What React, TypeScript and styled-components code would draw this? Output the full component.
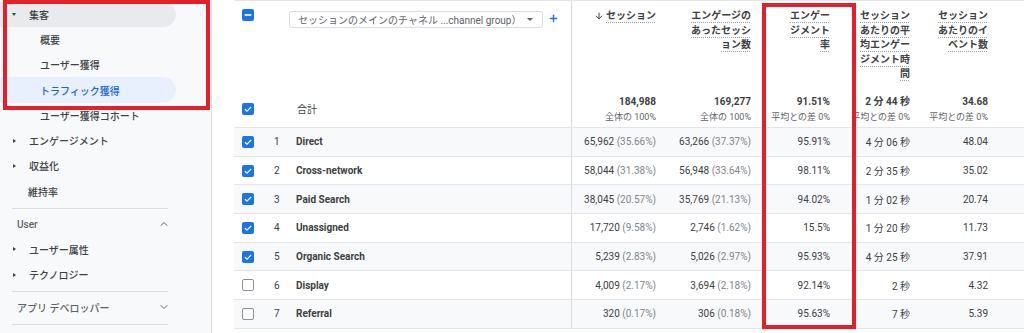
import React from 'react';
import styled, { createGlobalStyle } from 'styled-components';
import { ArrowDown, ChevronDown, ChevronUp, Plus } from 'lucide-react';

const GlobalStyle = createGlobalStyle`
  html, body {
    margin: 0;
    padding: 0;
    background: #ffffff;
  }
  body {
    font-family: Roboto, "Noto Sans CJK JP", sans-serif;
    font-size: 10px;
    color: #3c4043;
  }
  * {
    box-sizing: border-box;
  }
`;

const Page = styled.div`
  position: relative;
  display: flex;
  width: 1024px;
  height: 333px;
  overflow: hidden;
`;

/* ---------- sidebar ---------- */

const Sidebar = styled.nav`
  flex: none;
  width: 212px;
  padding-top: 1.5px;
  background: #f8f9fa;
  border-right: 1px solid #dadce0;
`;

const NavItem = styled.div<{ $indent: number; $variant?: 'open' | 'active' }>`
  display: flex;
  align-items: center;
  width: 176px;
  height: 25.3px;
  padding-left: ${(p) => p.$indent}px;
  border-radius: 0 13px 13px 0;
  font-weight: 500;
  white-space: nowrap;
  color: ${(p) => (p.$variant === 'active' ? '#1967d2' : '#3c4043')};
  background: ${(p) =>
    p.$variant === 'open' ? '#e8eaed' : p.$variant === 'active' ? '#e8f0fe' : 'transparent'};
`;

const CaretBox = styled.span`
  display: flex;
  align-items: center;
  width: 17px;
  height: 100%;
`;

const Caret = styled.span<{ $open?: boolean }>`
  display: block;
  width: 0;
  height: 0;
  ${(p) =>
    p.$open
      ? `border-left: 2.5px solid transparent;
         border-right: 2.5px solid transparent;
         border-top: 3px solid #3c4043;`
      : `margin-left: 1px;
         border-top: 2.5px solid transparent;
         border-bottom: 2.5px solid transparent;
         border-left: 3px solid #3c4043;`}
`;

const Divider = styled.div`
  width: 156px;
  height: 1px;
  margin: 4px 0 2.5px 12px;
  background: #dadce0;
`;

const SectionHead = styled.div`
  display: flex;
  align-items: center;
  justify-content: space-between;
  width: 170px;
  height: 25.3px;
  padding-left: 17px;
  color: #5f6368;
  font-weight: 500;
  svg {
    color: #5f6368;
  }
`;

/* ---------- report table ---------- */

const Main = styled.main`
  flex: 1;
  padding-left: 22px;
`;

const cols = '28px 28px 282px 93px 95px 79px 80px 78px 1fr';

const Table = styled.div`
  border-top: 1px solid #e3e5e8;
`;

const Row = styled.div<{ $height: number; $shade?: boolean; $line?: boolean }>`
  display: grid;
  grid-template-columns: ${cols};
  height: ${(p) => p.$height}px;
  background: ${(p) => (p.$shade ? '#f8f9fa' : '#ffffff')};
  border-bottom: ${(p) => (p.$line ? '1px solid #e3e5e8' : 'none')};
`;

const Cell = styled.div<{ $align?: 'top' | 'center'; $pl?: number; $divide?: boolean }>`
  display: flex;
  align-items: ${(p) => (p.$align === 'top' ? 'flex-start' : 'center')};
  padding-left: ${(p) => p.$pl ?? 0}px;
  min-width: 0;
  border-right: ${(p) => (p.$divide ? '1px solid #dadce0' : 'none')};
`;

const MetricCell = styled.div<{ $top?: boolean }>`
  display: flex;
  flex-direction: column;
  align-items: flex-end;
  justify-content: ${(p) => (p.$top ? 'flex-start' : 'center')};
  padding: ${(p) => (p.$top ? '8px 9px 0 0' : '0 9px 0 0')};
  white-space: nowrap;
  text-align: right;
`;

const TitleLine = styled.span`
  display: flex;
  align-items: center;
  gap: 2px;
  line-height: 14.6px;
  font-weight: 700;
  color: #3c4043;
`;

const Dotted = styled.span`
  text-decoration: underline dotted #9aa0a6;
  text-decoration-thickness: 1px;
  text-underline-offset: 3px;
`;

const Check = styled.span<{ $state: 'on' | 'off' | 'mixed' }>`
  display: inline-flex;
  align-items: center;
  justify-content: center;
  flex: none;
  width: 12px;
  height: 12px;
  border-radius: 2px;
  background: ${(p) => (p.$state === 'off' ? '#ffffff' : '#1a73e8')};
  border: ${(p) => (p.$state === 'off' ? '1.5px solid #8d9196' : 'none')};
`;

const Picker = styled.div`
  display: flex;
  align-items: center;
  justify-content: space-between;
  width: 254px;
  height: 17px;
  margin: 10px 0 0 -1px;
  padding: 0 9px 0 8px;
  border: 1px solid #dadce0;
  border-radius: 3px;
  color: #5f6368;
  white-space: nowrap;
`;

const PickerCaret = styled.span`
  width: 0;
  height: 0;
  border-left: 3px solid transparent;
  border-right: 3px solid transparent;
  border-top: 3px solid #5f6368;
`;

const AddButton = styled.span`
  display: flex;
  margin: 12px 0 0 5px;
  color: #1a73e8;
`;

const TotalLabel = styled.span`
  color: #3c4043;
`;

const TotalValue = styled.span`
  line-height: 14px;
  font-weight: 700;
  color: #3c4043;
`;

const TotalSub = styled.span`
  margin-top: 2px;
  font-size: 9px;
  line-height: 12px;
  color: #5f6368;
`;

const RowNum = styled.span`
  color: #3c4043;
`;

const Channel = styled.span`
  font-weight: 700;
  color: #3c4043;
`;

const Value = styled.span`
  color: #3c4043;
`;

const Share = styled.span`
  color: #80868b;
`;

/* ---------- annotations ---------- */

const Highlight = styled.div<{ $x: number; $y: number; $w: number; $h: number }>`
  position: absolute;
  left: ${(p) => p.$x}px;
  top: ${(p) => p.$y}px;
  width: ${(p) => p.$w}px;
  height: ${(p) => p.$h}px;
  border: 4px solid #e3202a;
  pointer-events: none;
`;

const CheckBox = ({ state }: { state: 'on' | 'off' | 'mixed' }) => (
  <Check $state={state}>
    {state === 'on' && (
      <svg width="12" height="12" viewBox="0 0 12 12">
        <path d="M2.9 6.2 L5 8.2 L9.2 3.9" fill="none" stroke="#fff" strokeWidth="1.3" />
      </svg>
    )}
    {state === 'mixed' && (
      <svg width="12" height="12" viewBox="0 0 12 12">
        <path d="M2.6 6 H9.4" stroke="#fff" strokeWidth="1.7" />
      </svg>
    )}
  </Check>
);

const headers: { lines: string[]; arrow?: boolean; total: string; sub: string }[] = [
  { lines: ['セッション'], arrow: true, total: '184,988', sub: '全体の 100%' },
  { lines: ['エンゲージの', 'あったセッシ', 'ョン数'], total: '169,277', sub: '全体の 100%' },
  { lines: ['エンゲー', 'ジメント', '率'], total: '91.51%', sub: '平均との差 0%' },
  { lines: ['セッション', 'あたりの平', '均エンゲー', 'ジメント時', '間'], total: '2 分 44 秒', sub: '平均との差 0%' },
  { lines: ['セッション', 'あたりのイ', 'ベント数'], total: '34.68', sub: '平均との差 0%' },
];

const rows = [
  { name: 'Direct', on: true, s: '65,962', sp: '35.66%', e: '63,266', ep: '37.37%', rate: '95.91%', time: '4 分 06 秒', ev: '48.04' },
  { name: 'Cross-network', on: true, s: '58,044', sp: '31.38%', e: '56,948', ep: '33.64%', rate: '98.11%', time: '2 分 35 秒', ev: '35.02' },
  { name: 'Paid Search', on: true, s: '38,045', sp: '20.57%', e: '35,769', ep: '21.13%', rate: '94.02%', time: '1 分 02 秒', ev: '20.74' },
  { name: 'Unassigned', on: true, s: '17,720', sp: '9.58%', e: '2,746', ep: '1.62%', rate: '15.5%', time: '1 分 20 秒', ev: '11.73' },
  { name: 'Organic Search', on: true, s: '5,239', sp: '2.83%', e: '5,026', ep: '2.97%', rate: '95.93%', time: '4 分 25 秒', ev: '37.91' },
  { name: 'Display', on: false, s: '4,009', sp: '2.17%', e: '3,694', ep: '2.18%', rate: '92.14%', time: '2 秒', ev: '4.32' },
  { name: 'Referral', on: false, s: '320', sp: '0.17%', e: '306', ep: '0.18%', rate: '95.63%', time: '7 秒', ev: '5.39' },
];

const App = () => (
  <Page>
    <GlobalStyle />
    <Sidebar>
      <NavItem $indent={12} $variant="open">
        <CaretBox>
          <Caret $open />
        </CaretBox>
        集客
      </NavItem>
      <NavItem $indent={40}>概要</NavItem>
      <NavItem $indent={40}>ユーザー獲得</NavItem>
      <NavItem $indent={40} $variant="active">トラフィック獲得</NavItem>
      <NavItem $indent={40}>ユーザー獲得コホート</NavItem>
      <NavItem $indent={12}>
        <CaretBox>
          <Caret />
        </CaretBox>
        エンゲージメント
      </NavItem>
      <NavItem $indent={12}>
        <CaretBox>
          <Caret />
        </CaretBox>
        収益化
      </NavItem>
      <NavItem $indent={28}>維持率</NavItem>
      <Divider />
      <SectionHead>
        User
        <ChevronUp size={12} strokeWidth={2} />
      </SectionHead>
      <NavItem $indent={12}>
        <CaretBox>
          <Caret />
        </CaretBox>
        ユーザー属性
      </NavItem>
      <NavItem $indent={12}>
        <CaretBox>
          <Caret />
        </CaretBox>
        テクノロジー
      </NavItem>
      <Divider />
      <SectionHead>
        アプリ デベロッパー
        <ChevronDown size={12} strokeWidth={2} />
      </SectionHead>
      <Divider />
    </Sidebar>

    <Main>
      <Table>
        <Row $height={89}>
          <Cell $align="top" $pl={8} style={{ paddingTop: 8 }}>
            <CheckBox state="mixed" />
          </Cell>
          <Cell $align="top" />
          <Cell $align="top" $divide>
            <Picker>
              セッションのメインのチャネル ...channel group）
              <PickerCaret />
            </Picker>
            <AddButton>
              <Plus size={11} strokeWidth={3} />
            </AddButton>
          </Cell>
          {headers.map((h, i) => (
            <MetricCell key={i} $top>
              {h.lines.map((line, j) => (
                <TitleLine key={j}>
                  {h.arrow && <ArrowDown size={10} strokeWidth={2.4} />}
                  <Dotted>{line}</Dotted>
                </TitleLine>
              ))}
            </MetricCell>
          ))}
          <div />
        </Row>

        <Row $height={38} $line>
          <Cell $pl={8}>
            <CheckBox state="on" />
          </Cell>
          <Cell />
          <Cell $pl={7} $divide>
            <TotalLabel>合計</TotalLabel>
          </Cell>
          {headers.map((h, i) => (
            <MetricCell key={i}>
              <TotalValue>{h.total}</TotalValue>
              <TotalSub>{h.sub}</TotalSub>
            </MetricCell>
          ))}
          <div />
        </Row>

        {rows.map((r, i) => (
          <Row key={r.name} $height={28.7} $shade={i % 2 === 0} $line>
            <Cell $pl={8}>
              <CheckBox state={r.on ? 'on' : 'off'} />
            </Cell>
            <Cell $pl={12}>
              <RowNum>{i + 1}</RowNum>
            </Cell>
            <Cell $pl={6} $divide>
              <Channel>{r.name}</Channel>
            </Cell>
            <MetricCell>
              <Value>
                {r.s} <Share>({r.sp})</Share>
              </Value>
            </MetricCell>
            <MetricCell>
              <Value>
                {r.e} <Share>({r.ep})</Share>
              </Value>
            </MetricCell>
            <MetricCell>
              <Value>{r.rate}</Value>
            </MetricCell>
            <MetricCell>
              <Value>{r.time}</Value>
            </MetricCell>
            <MetricCell>
              <Value>{r.ev}</Value>
            </MetricCell>
            <div />
          </Row>
        ))}
      </Table>
    </Main>

    <Highlight $x={3} $y={0} $w={207} $h={110} />
    <Highlight $x={762} $y={3} $w={94} $h={326} />
  </Page>
);

export default App;
